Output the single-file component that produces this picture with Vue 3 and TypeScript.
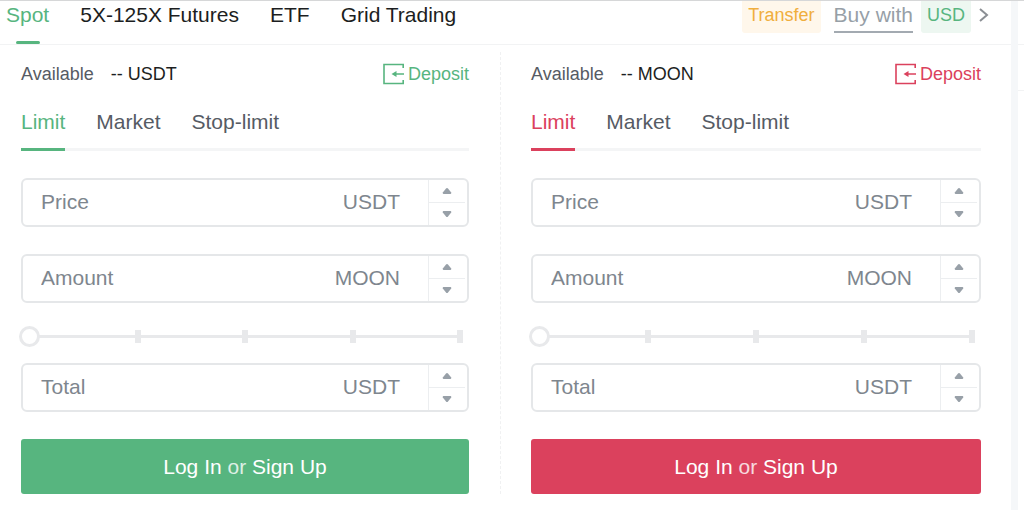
<script setup lang="ts">
import { reactive, ref } from 'vue'

interface Field {
  key: 'price' | 'amount' | 'total'
  label: string
  unit: string
}

interface Side {
  id: 'buy' | 'sell'
  asset: string
  tab: string
  percent: number
  values: Record<Field['key'], string>
}

const markets = ['Spot', '5X-125X Futures', 'ETF', 'Grid Trading']
const activeMarket = ref('Spot')
const orderTypes = ['Limit', 'Market', 'Stop-limit']

const upperFields: Field[] = [
  { key: 'price', label: 'Price', unit: 'USDT' },
  { key: 'amount', label: 'Amount', unit: 'MOON' },
]
const lowerFields: Field[] = [{ key: 'total', label: 'Total', unit: 'USDT' }]
const groups = [
  { name: 'upper', fields: upperFields },
  { name: 'lower', fields: lowerFields },
]

const sides = reactive<Side[]>([
  { id: 'buy', asset: 'USDT', tab: 'Limit', percent: 0, values: { price: '', amount: '', total: '' } },
  { id: 'sell', asset: 'MOON', tab: 'Limit', percent: 0, values: { price: '', amount: '', total: '' } },
])

function step(side: Side, key: Field['key'], delta: number) {
  const next = Math.max(0, (Number(side.values[key]) || 0) + delta)
  side.values[key] = String(next)
}
</script>

<template>
  <div class="page">
    <main class="trade">
      <header class="top">
        <nav class="markets">
          <a
            v-for="m in markets"
            :key="m"
            href="#"
            :class="{ active: m === activeMarket }"
            @click.prevent="activeMarket = m"
          >{{ m }}</a>
        </nav>
        <div class="actions">
          <button type="button" class="tag transfer">Transfer</button>
          <a href="#" class="buy-with">Buy with</a>
          <button type="button" class="tag usd">USD</button>
          <button type="button" class="more" aria-label="More">
            <svg width="10" height="14" viewBox="0 0 10 14"><path d="M1 1 8 7 1 13" /></svg>
          </button>
        </div>
      </header>

      <div class="panes">
        <section v-for="side in sides" :key="side.id" class="pane" :class="side.id">
          <div class="balance">
            <span class="caption">Available</span>
            <span class="funds">-- {{ side.asset }}</span>
            <a href="#" class="deposit">
              <svg width="22" height="22" viewBox="0 0 22 22">
                <path class="line" d="M20.2 5V1.5H1V20.5H20.2V17M21 11H12" />
                <path class="head" d="M8.5 11 13.5 8V14Z" />
              </svg>
              <span>Deposit</span>
            </a>
          </div>

          <div class="tabs">
            <button
              v-for="t in orderTypes"
              :key="t"
              type="button"
              :class="{ active: t === side.tab }"
              @click="side.tab = t"
            >{{ t }}</button>
          </div>

          <template v-for="group in groups" :key="group.name">
            <div v-if="group.name === 'lower'" class="slider">
              <div class="ticks"><i v-for="n in 5" :key="n"></i></div>
              <input v-model.number="side.percent" type="range" min="0" max="100" aria-label="Percent of balance" />
            </div>
            <div class="fields">
              <div v-for="f in group.fields" :key="f.key" class="field">
                <input
                  :id="`${side.id}-${f.key}`"
                  v-model="side.values[f.key]"
                  type="text"
                  :placeholder="f.label"
                  :aria-label="f.label"
                />
                <label class="unit" :for="`${side.id}-${f.key}`">{{ f.unit }}</label>
                <div class="stepper">
                  <button type="button" :aria-label="`Increase ${f.label}`" @click="step(side, f.key, 1)">
                    <svg width="10" height="6" viewBox="0 0 10 6"><path d="M5 0 Q5.6 0 6 .5L9.2 4.6Q9.5 6 8.5 6H1.5Q.5 6 .8 4.6L4 .5Q4.4 0 5 0Z" /></svg>
                  </button>
                  <button type="button" :aria-label="`Decrease ${f.label}`" @click="step(side, f.key, -1)">
                    <svg width="10" height="6" viewBox="0 0 10 6"><path d="M5 6 Q5.6 6 6 5.5L9.2 1.4Q9.5 0 8.5 0H1.5Q.5 0 .8 1.4L4 5.5Q4.4 6 5 6Z" /></svg>
                  </button>
                </div>
              </div>
            </div>
          </template>

          <button type="button" class="submit">Log In <span>or</span> Sign Up</button>
        </section>
      </div>
    </main>
    <aside class="next">
      <div class="next-head"></div>
      <div class="next-row"></div>
    </aside>
  </div>
</template>

<style>
body {
  background: #fff;
}
</style>

<style scoped>
* {
  box-sizing: border-box;
}

.page {
  display: flex;
  min-height: 100vh;
  border-top: 1px solid #d6d7d8;
  background: #fff;
  color: #1c1e21;
  font-family: "Liberation Sans", Arial, sans-serif;
  font-size: 21px;
  line-height: 28px;
}

button,
input {
  margin: 0;
  padding: 0;
  border: 0;
  background: none;
  color: inherit;
  font: inherit;
}

button {
  cursor: pointer;
}

a {
  color: inherit;
  text-decoration: none;
}

svg {
  display: block;
}

.trade {
  flex: 1;
  min-width: 0;
}

.next {
  display: flex;
  flex-direction: column;
  flex: 0 0 13px;
  border-left: 7px solid #f5f7f9;
}

.next-head {
  height: 44px;
  border-bottom: 1px solid #f2f3f4;
}

.next-row {
  height: 46px;
  border-bottom: 1px solid #f2f3f4;
}

.top {
  display: flex;
  justify-content: space-between;
  height: 44px;
  padding: 0 22px 0 6px;
  border-bottom: 1px solid #f2f3f4;
}

.markets {
  display: flex;
  gap: 31px;
}

.markets a {
  display: flex;
  flex-direction: column;
  justify-content: space-between;
  align-items: center;
}

.markets a.active {
  color: #57b57f;
}

.markets a.active::after {
  content: "";
  width: 24px;
  height: 3px;
  border-radius: 2px;
  background: #57b57f;
}

.actions {
  display: flex;
  align-items: flex-start;
}

.tag {
  height: 32px;
  padding: 0 6px 4px;
  border-radius: 0 0 3px 3px;
  font-size: 18px;
  line-height: 28px;
}

.transfer {
  background: #fff7eb;
  color: #f0ae3d;
}

.usd {
  background: #edf7f1;
  color: #57b57f;
}

.buy-with {
  height: 32px;
  margin: 0 8px 0 13px;
  border-bottom: 2px solid #a3aab1;
  color: #979fa7;
}

.more {
  margin: 7px 0 0 8px;
}

.more path {
  fill: none;
  stroke: #8b8f94;
  stroke-width: 2;
}

.panes {
  display: grid;
  grid-template-columns: 500fr 511fr;
  padding-top: 7px;
}

.pane {
  min-width: 0;
  padding: 8px 31px 0 21px;
}

.buy {
  --accent: #57b57f;
}

.sell {
  --accent: #db415d;
  padding: 8px 30px 0 30px;
  border-left: 1px dashed #f0f1f2;
}

.balance {
  display: flex;
  align-items: center;
  gap: 17px;
  font-size: 18px;
}

.caption {
  color: #565b64;
}

.deposit {
  display: flex;
  align-items: center;
  gap: 3px;
  margin-left: auto;
  color: var(--accent);
}

.deposit .line {
  fill: none;
  stroke: var(--accent);
  stroke-width: 1.6;
}

.deposit .head {
  fill: var(--accent);
}

.tabs {
  display: flex;
  gap: 31px;
  height: 44px;
  margin: 19px 0 27px;
  border-bottom: 3px solid #f4f5f6;
  color: #565b64;
}

.tabs button {
  height: 44px;
  padding-bottom: 11px;
  border-bottom: 3px solid transparent;
}

.tabs button.active {
  border-color: var(--accent);
  color: var(--accent);
}

.fields {
  display: grid;
  gap: 27px;
}

.field {
  display: flex;
  height: 49px;
  border: 2px solid #e5e7e9;
  border-radius: 6px;
  color: #7e868e;
}

.field input {
  flex: 1;
  min-width: 0;
  padding: 0 0 2px 18px;
  outline: none;
}

.field input::placeholder {
  color: #7e868e;
  opacity: 1;
}

.unit {
  align-self: center;
  padding-bottom: 2px;
  margin-right: 28px;
}

.stepper {
  display: grid;
  grid-template-rows: 1fr 1fr;
  flex: 0 0 39px;
  padding-right: 2px;
  border-left: 1px solid #eceef0;
}

.stepper button {
  display: grid;
  place-items: center;
}

.stepper button:first-child {
  border-bottom: 1px solid #eceef0;
}

.stepper path {
  fill: #98a0a8;
}

.slider {
  display: grid;
  height: 21px;
  margin: 23px 6px 16px -2px;
}

.slider > * {
  grid-area: 1 / 1;
}

.ticks {
  display: flex;
  justify-content: space-between;
  align-items: center;
  margin-left: 8px;
  background: linear-gradient(#e8e9eb, #e8e9eb) center / 100% 3px no-repeat;
}

.ticks i {
  width: 6px;
  height: 13px;
  background: #e8e9eb;
}

.slider input {
  z-index: 1;
  width: 100%;
  height: 21px;
  appearance: none;
  cursor: pointer;
}

.slider input::-webkit-slider-thumb {
  width: 21px;
  height: 21px;
  border: 3px solid #e8e9eb;
  border-radius: 50%;
  background: #fff;
  appearance: none;
}

.submit {
  width: 100%;
  height: 55px;
  margin-top: 27px;
  border-radius: 3px;
  background: var(--accent);
  color: #fff;
}

.submit span {
  opacity: 0.8;
}
</style>
